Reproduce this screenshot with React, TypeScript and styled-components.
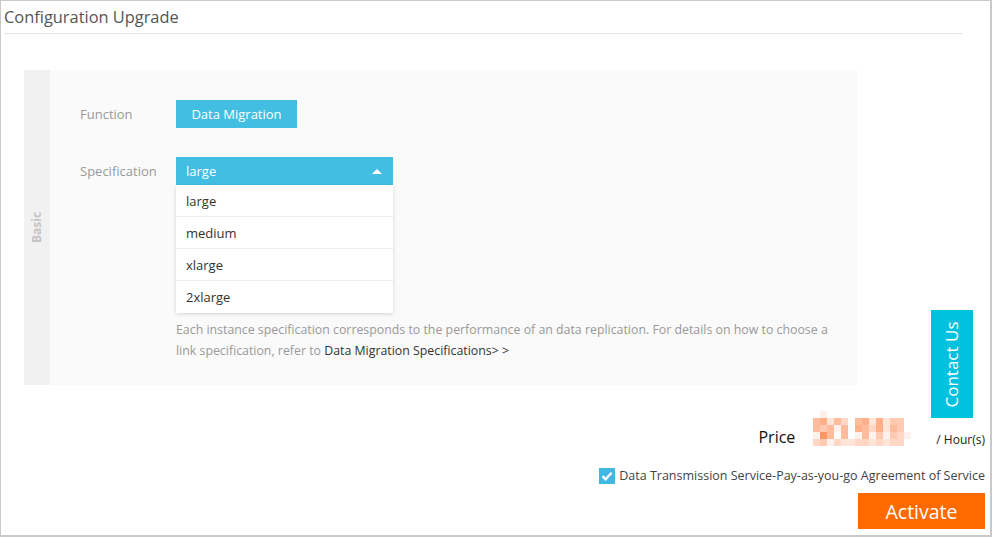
import React from 'react';
import styled, { createGlobalStyle } from 'styled-components';

const GlobalStyle = createGlobalStyle`
  html, body {
    margin: 0;
    padding: 0;
    background: #ffffff;
  }
  body {
    font-family: "Open Sans", "Noto Sans", Arial, sans-serif;
    color: #333;
  }
  * {
    box-sizing: border-box;
  }
`;

const Page = styled.div`
  position: relative;
  width: 992px;
  height: 537px;
  border-top: 1px solid #c9c9c9;
  border-left: 1px solid #c9c9c9;
  border-right: 2px solid #c9c9c9;
  border-bottom: 2px solid #c9c9c9;
  display: flex;
  flex-direction: column;
  overflow: hidden;
`;

const Header = styled.header`
  margin: 0 27px 0 3px;
  height: 33px;
  border-bottom: 1px solid #e1e6eb;
  display: flex;
  align-items: center;
`;

const Title = styled.h1`
  margin: 0;
  font-size: 16.4px;
  font-weight: 400;
  color: #555;
  line-height: 30px;
`;

const Panel = styled.section`
  margin: 36px 0 0 23px;
  width: 833px;
  height: 315px;
  display: flex;
  background: #fafafa;
`;

const SideStrip = styled.div`
  width: 26px;
  background: #f1f1f1;
  display: flex;
  align-items: center;
  justify-content: center;
`;

const SideLabel = styled.span`
  transform: rotate(-90deg);
  font-size: 12px;
  font-weight: 700;
  color: #c4c4c4;
  white-space: nowrap;
`;

const PanelBody = styled.div`
  flex: 1;
  padding: 30px 0 0 30px;
  display: flex;
  flex-direction: column;
  gap: 29px;
`;

const Row = styled.div`
  display: flex;
  align-items: flex-start;
`;

const Label = styled.div`
  width: 96px;
  height: 28px;
  line-height: 28px;
  font-size: 13px;
  color: #999;
`;

const Field = styled.div`
  display: flex;
  flex-direction: column;
`;

const FuncButton = styled.button`
  height: 28px;
  width: 121px;
  padding: 0;
  border: none;
  background: #43bee3;
  color: #fff;
  font-family: inherit;
  font-size: 13px;
  cursor: pointer;
`;

const Select = styled.div`
  width: 217px;
`;

const SelectHead = styled.div`
  height: 28px;
  background: #43bee3;
  color: #fff;
  font-size: 13px;
  padding: 0 10px;
  display: flex;
  align-items: center;
  justify-content: space-between;
`;

const Caret = styled.span`
  width: 0;
  height: 0;
  border-left: 5px solid transparent;
  border-right: 5px solid transparent;
  border-bottom: 5px solid #fff;
  margin-right: 1px;
`;

const Options = styled.ul`
  margin: 0;
  padding: 0;
  list-style: none;
  background: #fff;
  box-shadow: 0 1px 4px rgba(0, 0, 0, 0.16);
`;

const Option = styled.li`
  height: 32px;
  line-height: 33px;
  padding: 0 10px;
  font-size: 13px;
  color: #333;
  border-bottom: 1px solid #ececec;
  &:last-child {
    border-bottom: none;
  }
`;

const Help = styled.p`
  margin: 6px 0 0;
  width: 660px;
  font-size: 12.35px;
  line-height: 21px;
  color: #999;
`;

const HelpLink = styled.a`
  color: #333;
  text-decoration: none;
`;

const ContactTab = styled.div`
  position: absolute;
  left: 930px;
  top: 309px;
  width: 42px;
  height: 108px;
  background: #00c1de;
  display: flex;
  align-items: center;
  justify-content: center;
`;

const ContactText = styled.span`
  transform: rotate(-90deg);
  color: #fff;
  font-size: 17px;
  white-space: nowrap;
`;

const Footer = styled.footer`
  display: flex;
  flex-direction: column;
  align-items: flex-end;
  padding-right: 5px;
`;

const PriceRow = styled.div`
  margin-top: 26px;
  display: flex;
  align-items: flex-end;
`;

const PriceLabel = styled.span`
  font-size: 16px;
  line-height: 16px;
  color: #111;
  margin: 0 18px 1px 0;
`;

const Unit = styled.span`
  font-size: 12px;
  line-height: 12px;
  color: #222;
  margin: 0 0 0 24px;
`;

const AgreeRow = styled.label`
  margin-top: 21px;
  display: flex;
  align-items: center;
  gap: 4px;
  font-size: 12.5px;
  color: #444;
`;

const CheckBox = styled.span`
  width: 16px;
  height: 16px;
  background: #41b8e1;
  display: flex;
  align-items: center;
  justify-content: center;
`;

const ActivateButton = styled.button`
  margin-top: 9px;
  width: 127px;
  height: 36px;
  border: none;
  background: #ff6a00;
  color: #fff;
  font-family: inherit;
  font-size: 19.5px;
  cursor: pointer;
`;

const mosaic: number[][] = [
  [0, 0.12, 0, 0, 0, 0, 0, 0, 0, 0, 0, 0, 0, 0],
  [0.5, 0.6, 0.2, 0.5, 0.3, 0, 0.5, 0.6, 0.2, 0.6, 0.2, 0.4, 0.4, 0],
  [0.5, 0.4, 0.5, 0.1, 0.5, 0, 0.6, 0.5, 0.3, 0.6, 0.2, 0.5, 0.4, 0],
  [0.1, 0.8, 0.5, 0, 0.5, 0, 0.1, 0.5, 0.1, 0.4, 0.1, 0.4, 0.3, 0.1],
  [0.3, 0.4, 0.1, 0.3, 0.2, 0.2, 0.3, 0.3, 0.2, 0.3, 0.2, 0.3, 0.3, 0],
];

const PriceMosaic: React.FC = () => (
  <svg width="99" height="35" viewBox="0 0 99 35">
    {mosaic.map((row, r) =>
      row.map((a, c) =>
        a > 0 ? (
          <rect key={`${r}-${c}`} x={c * 7} y={r * 7} width="7" height="7" fill="#ff7a3c" fillOpacity={a} />
        ) : null
      )
    )}
  </svg>
);

const App: React.FC = () => {
  const specs = ['large', 'medium', 'xlarge', '2xlarge'];
  return (
    <>
      <GlobalStyle />
      <Page>
        <Header>
          <Title>Configuration Upgrade</Title>
        </Header>
        <Panel>
          <SideStrip>
            <SideLabel>Basic</SideLabel>
          </SideStrip>
          <PanelBody>
            <Row>
              <Label>Function</Label>
              <FuncButton>Data Migration</FuncButton>
            </Row>
            <Row>
              <Label>Specification</Label>
              <Field>
                <Select>
                  <SelectHead>
                    <span>large</span>
                    <Caret />
                  </SelectHead>
                  <Options>
                    {specs.map((s) => (
                      <Option key={s}>{s}</Option>
                    ))}
                  </Options>
                </Select>
                <Help>
                  Each instance specification corresponds to the performance of an data replication. For details on how
                  to choose a link specification, refer to <HelpLink href="#">Data Migration Specifications&gt; &gt;</HelpLink>
                </Help>
              </Field>
            </Row>
          </PanelBody>
        </Panel>
        <Footer>
          <PriceRow>
            <PriceLabel>Price</PriceLabel>
            <PriceMosaic />
            <Unit>/ Hour(s)</Unit>
          </PriceRow>
          <AgreeRow>
            <CheckBox>
              <svg width="12" height="10" viewBox="0 0 12 10">
                <path d="M1.5 5.2 L4.6 8.2 L10.6 1.8" fill="none" stroke="#fff" strokeWidth="2.4" />
              </svg>
            </CheckBox>
            Data Transmission Service-Pay-as-you-go Agreement of Service
          </AgreeRow>
          <ActivateButton>Activate</ActivateButton>
        </Footer>
        <ContactTab>
          <ContactText>Contact Us</ContactText>
        </ContactTab>
      </Page>
    </>
  );
};

export default App;
